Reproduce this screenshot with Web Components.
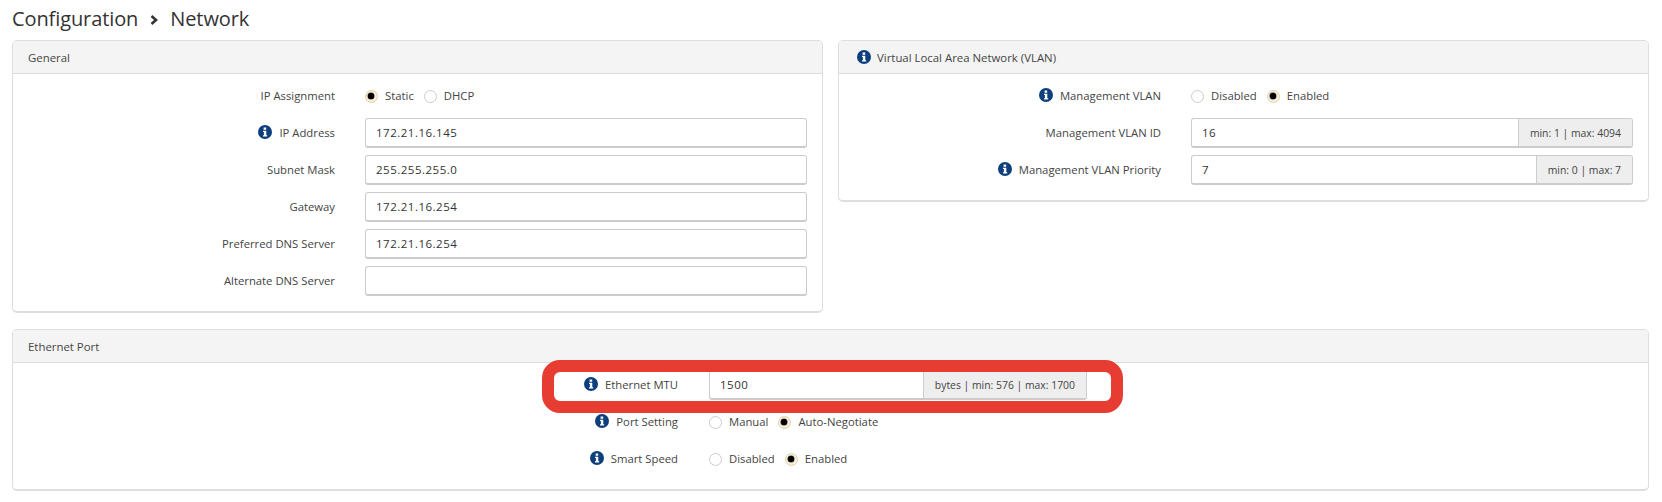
<!DOCTYPE html>
<html lang="en"><head><meta charset="utf-8"><title>Network</title>
<style>
html,body{margin:0;padding:0;background:#fff}
body{font:12px "Open Sans","Noto Sans",sans-serif;color:#444;width:1662px;height:502px;overflow:hidden}
</style></head><body>
<net-page>
  <page-title slot="title" section="Configuration" page="Network"></page-title>
  <div slot="top" style="display:contents">
  <net-panel heading="General" style="--label:322px">
    <form-row label="IP Assignment"><radio-set options="Static,DHCP" selected="Static"></radio-set></form-row>
    <form-row label="IP Address" info><text-field value="172.21.16.145"></text-field></form-row>
    <form-row label="Subnet Mask"><text-field value="255.255.255.0"></text-field></form-row>
    <form-row label="Gateway"><text-field value="172.21.16.254"></text-field></form-row>
    <form-row label="Preferred DNS Server"><text-field value="172.21.16.254"></text-field></form-row>
    <form-row label="Alternate DNS Server"><text-field value=""></text-field></form-row>
  </net-panel>
  <net-panel heading="Virtual Local Area Network (VLAN)" info style="--label:322px;align-self:start">
    <form-row label="Management VLAN" info><radio-set options="Disabled,Enabled" selected="Enabled"></radio-set></form-row>
    <form-row label="Management VLAN ID"><text-field value="16" addon="min: 1 | max: 4094"></text-field></form-row>
    <form-row label="Management VLAN Priority" info><text-field value="7" addon="min: 0 | max: 7"></text-field></form-row>
  </net-panel>
  </div>
  <net-panel slot="bottom" heading="Ethernet Port" style="--label:665px;--gap:31px;--control:378px">
    <form-row label="Ethernet MTU" info><text-field value="1500" addon="bytes | min: 576 | max: 1700"></text-field></form-row>
    <form-row label="Port Setting" info><radio-set options="Manual,Auto-Negotiate" selected="Auto-Negotiate"></radio-set></form-row>
    <form-row label="Smart Speed" info><radio-set options="Disabled,Enabled" selected="Enabled"></radio-set></form-row>
    <red-highlight slot="overlay"></red-highlight>
  </net-panel>
</net-page>
<script>
const infoIcon=`<svg width="14" height="14" viewBox="0 0 14 14" aria-hidden="true" style="display:block;flex:none"><circle cx="7" cy="7" r="7" fill="#0c3f7c"/><path fill="#fff" d="M5.6 2.6h2.6v2.1H5.6zM5 5.7h3.3v4.5h.9v1.4H5v-1.4h.9V7.1H5z"/></svg>`;
class Base extends HTMLElement{
  render(html){ if(!this.shadowRoot) this.attachShadow({mode:'open'}); this.shadowRoot.innerHTML=html; }
  connectedCallback(){ this.render(this.tpl()); }
}
customElements.define('net-page',class extends Base{tpl(){return `<style>
:host{display:block;box-sizing:border-box;padding:0 13px 0 12px}
.top{display:grid;grid-template-columns:811px 811px;column-gap:15px;height:271px;margin-bottom:18px}
::slotted([slot=top]){display:contents}
</style><slot name="title"></slot><div class="top"><slot name="top"></slot></div><slot name="bottom"></slot>`}});
customElements.define('page-title',class extends Base{tpl(){return `<style>
:host{display:flex;align-items:center;height:40px;box-sizing:border-box;padding-bottom:4px;font-size:20px;color:#333;letter-spacing:-.1px}
svg{margin:4px 12px 0 12px;display:block}
</style><span>${this.getAttribute('section')}</span><svg width="8" height="10" viewBox="0 0 8 10"><path d="M1.5 1l4.5 4-4.5 4" fill="none" stroke="#333" stroke-width="2.6"/></svg><span>${this.getAttribute('page')}</span>`}});
customElements.define('net-panel',class extends Base{tpl(){const i=this.hasAttribute('info');return `<style>
:host{display:block;position:relative;box-sizing:border-box;border:1px solid #dedede;border-bottom-width:2px;border-radius:5px;background:#fff;color:#444}
header{display:flex;align-items:center;gap:6px;height:32px;background:#f4f4f4;border-bottom:1px solid #ddd;border-radius:4px 4px 0 0;font-size:11.4px;color:#444;padding-left:${i?'18px':'15px'}}
.body{padding:7px 0 8px}
</style><header>${i?infoIcon:''}<span>${this.getAttribute('heading')}</span></header><div class="body"><slot></slot></div><slot name="overlay"></slot>`}});
customElements.define('form-row',class extends Base{tpl(){return `<style>
:host{display:grid;grid-template-columns:var(--label) var(--control,442px);column-gap:var(--gap,30px);align-items:center;height:30px;margin-bottom:7px}
.l{display:flex;justify-content:flex-end;align-items:center;gap:7px;font-size:11.3px;color:#444;padding-bottom:2px}
</style><div class="l">${this.hasAttribute('info')?infoIcon:''}<span>${this.getAttribute('label')}</span></div><div><slot></slot></div>`}});
customElements.define('radio-set',class extends Base{tpl(){const sel=this.getAttribute('selected');
return `<style>
:host{display:flex;align-items:center;font-size:11.3px;color:#444;height:30px}
label{display:flex;align-items:center;gap:7px;margin-right:10px}
span{padding-bottom:2px}
i{display:block;box-sizing:border-box;width:13px;height:13px;border-radius:50%;border:1px solid #ccc;background:#fff;position:relative;flex:none}
i.on{background:#f8efdc;border:1.5px solid #e3d2a9}
i.on::after{content:"";position:absolute;left:2px;top:2px;width:6px;height:6px;border-radius:50%;background:#000;box-shadow:0 0 0 .5px #333}
</style>`+this.getAttribute('options').split(',').map(o=>`<label><i class="${o===sel?'on':''}"></i><span>${o}</span></label>`).join('')}});
customElements.define('text-field',class extends Base{tpl(){const a=this.getAttribute('addon');
return `<style>
:host{display:flex;box-sizing:border-box;height:30px;border:1px solid #ccc;border-bottom-width:2px;border-radius:3px;background:#fff;overflow:hidden;font-size:11.5px}
.v{flex:1;padding-left:10px;display:flex;align-items:center;letter-spacing:.5px;color:#333}
.a{flex:none;box-sizing:border-box;display:flex;align-items:center;padding:0 11px;background:#eee;border-left:1px solid #ccc;font-size:10.4px;color:#444;white-space:nowrap}
</style><div class="v"><span>${this.getAttribute('value')}</span></div>${a?`<div class="a">${a}</div>`:''}`}});
customElements.define('red-highlight',class extends Base{tpl(){return `<style>
:host{display:block;position:absolute;left:529px;top:30px;width:581px;height:53px;box-sizing:border-box;border:12px solid #e63c31;border-radius:18px;pointer-events:none}
</style>`}});
</script>
</body></html>
